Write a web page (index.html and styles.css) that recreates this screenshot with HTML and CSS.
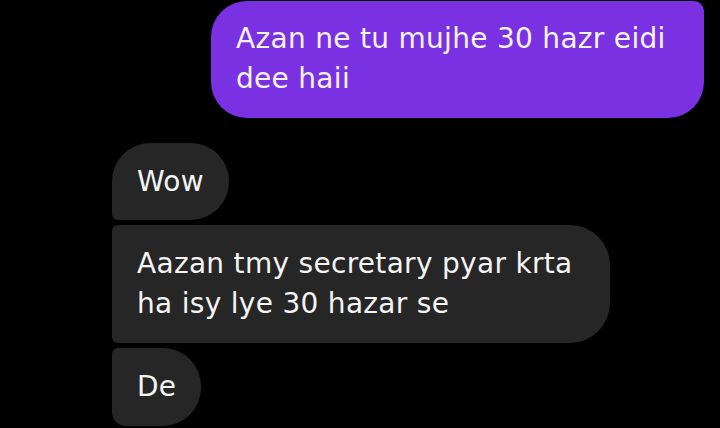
FILE: index.html
```html
<!DOCTYPE html>
<html>
<head>
<meta charset="utf-8">
<link rel="stylesheet" href="styles.css">
</head>
<body>
<div class="chat">
  <div class="row sent">
    <div class="bubble purple">Azan ne tu mujhe 30 hazr eidi<br>dee haii</div>
  </div>
  <div class="group">
    <div class="row recv">
      <div class="bubble gray first">Wow</div>
    </div>
    <div class="row recv">
      <div class="bubble gray middle">Aazan tmy secretary pyar krta<br>ha isy lye 30 hazar se</div>
    </div>
    <div class="row recv">
      <div class="bubble gray last">De</div>
    </div>
  </div>
</div>
</body>
</html>
```
FILE: styles.css
```css
html, body {
  margin: 0;
  padding: 0;
  background: #000;
  width: 720px;
  height: 428px;
  overflow: hidden;
}
.chat {
  padding-top: 1px;
  font-family: "DejaVu Sans", Roboto, sans-serif;
  font-size: 28px;
  letter-spacing: 0.3px;
  line-height: 40px;
  color: #f4f4f4;
}
.row {
  display: flex;
}
.sent {
  justify-content: flex-end;
  padding-right: 16px;
}
.recv {
  padding-left: 112px;
}
.group {
  margin-top: 25px;
  display: flex;
  flex-direction: column;
  gap: 5px;
}
.bubble {
  padding: 19px 25px;
  white-space: nowrap;
}
.purple {
  background: #7a31e2;
  width: 443px;
  padding-top: 18px;
  border-radius: 36px 10px 36px 36px;
}
.gray {
  background: #262626;
}
.first {
  border-radius: 38px 38px 38px 6px;
  padding-bottom: 18px;
}
.middle {
  width: 448px;
  border-radius: 6px 40px 40px 6px;
}
.last {
  border-radius: 6px 38px 38px 14px;
}
```
